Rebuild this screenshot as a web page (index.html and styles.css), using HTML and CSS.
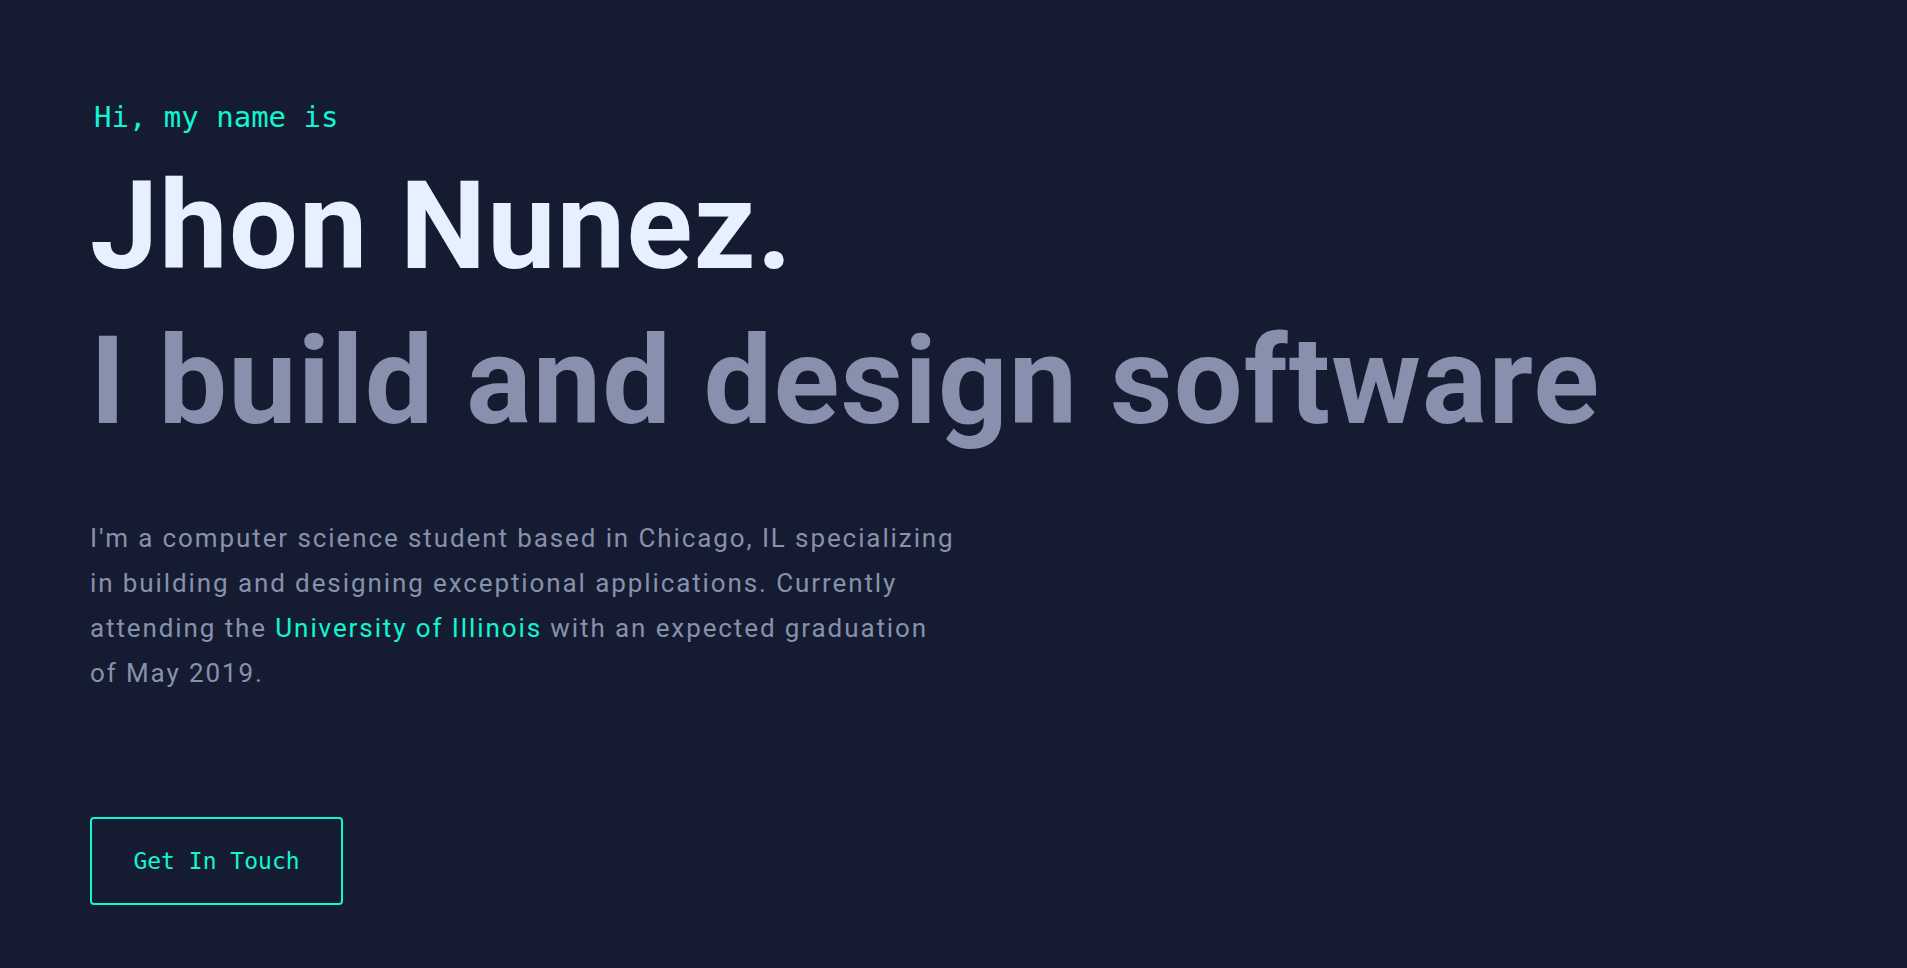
FILE: index.html
```html
<!DOCTYPE html>
<html lang="en">
<head>
<meta charset="utf-8">
<title>Jhon Nunez</title>
<link rel="stylesheet" href="styles.css">
</head>
<body>
<main class="hero">
  <h1 class="hero-greeting">Hi, my name is</h1>
  <h2 class="hero-name">Jhon Nunez.</h2>
  <h3 class="hero-tagline">I build and design software</h3>
  <p class="hero-blurb">I'm a computer science student based in Chicago, IL specializing in building and designing exceptional applications. Currently attending the <a class="hero-link" href="#">University of Illinois</a> with an expected graduation of May 2019.</p>
  <div class="hero-actions">
    <a class="hero-button" href="#">Get In Touch</a>
  </div>
</main>
</body>
</html>
```
FILE: styles.css
```css
html, body {
  margin: 0;
  padding: 0;
  background: #151c31;
}
body {
  min-height: 968px;
  font-family: Roboto, "Liberation Sans", sans-serif;
}
.hero {
  display: flex;
  flex-direction: column;
  align-items: flex-start;
  padding: 103px 0 0 90px;
}
.hero-greeting {
  margin: 0 0 0 4px;
  font-family: "DejaVu Sans Mono", "Liberation Mono", monospace;
  font-weight: 400;
  font-size: 29px;
  line-height: 28px;
  color: #10f5d2;
}
.hero-name,
.hero-tagline {
  margin: 0;
  font-family: Roboto, "Liberation Sans", sans-serif;
  font-weight: 700;
  font-size: 122px;
  line-height: 155px;
  letter-spacing: 1.2px;
}
.hero-name {
  margin-top: 18px;
  color: #e6f0ff;
}
.hero-tagline {
  color: #8890ad;
}
.hero-blurb {
  margin: 57px 0 0;
  max-width: 868px;
  font-size: 26px;
  line-height: 45px;
  letter-spacing: 1.9px;
  color: #8890ad;
}
.hero-link {
  color: #10f5d2;
  text-decoration: none;
}
.hero-actions {
  margin-top: 121px;
}
.hero-button {
  display: flex;
  align-items: center;
  justify-content: center;
  box-sizing: border-box;
  width: 253px;
  height: 88px;
  border: 2px solid #10f5d2;
  border-radius: 4px;
  font-family: "DejaVu Sans Mono", "Liberation Mono", monospace;
  font-size: 23px;
  color: #10f5d2;
  text-decoration: none;
}
```
